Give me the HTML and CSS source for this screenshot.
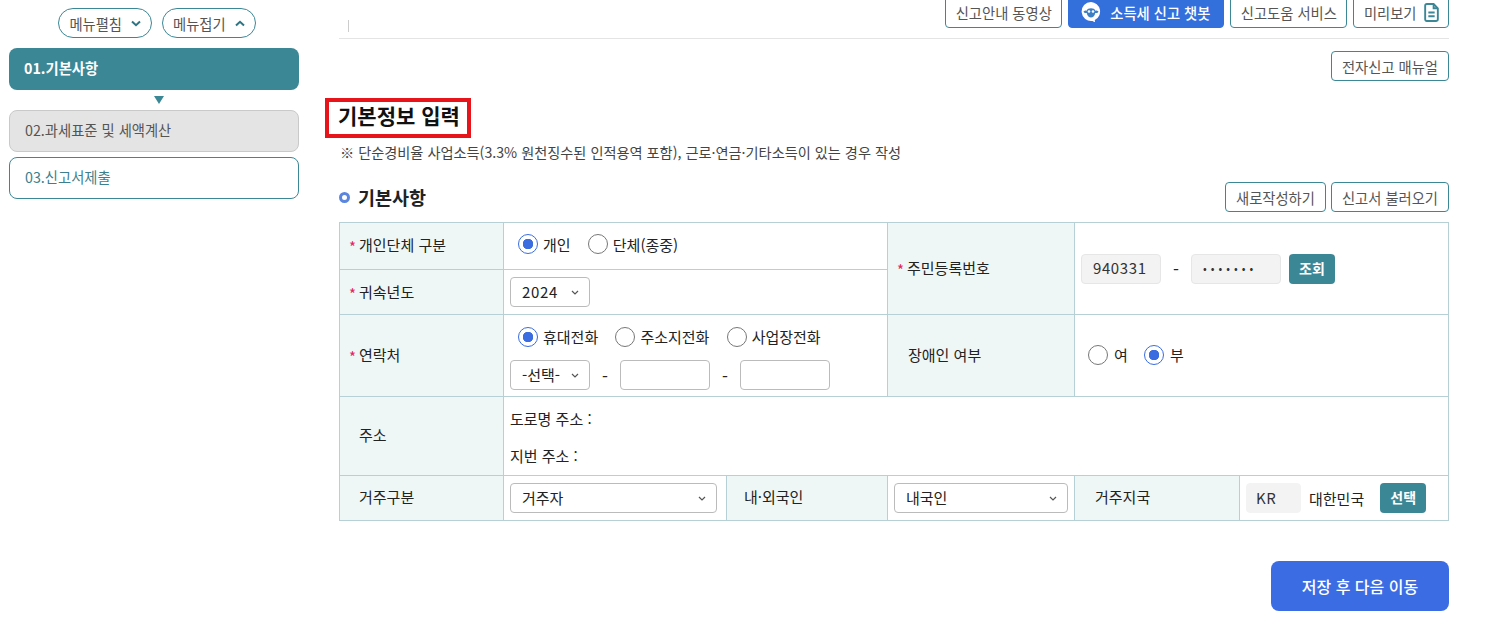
FILE: index.html
```html
<!DOCTYPE html>
<html lang="ko">
<head>
<meta charset="utf-8">
<title>기본정보 입력</title>
<link rel="stylesheet" href="styles.css">
</head>
<body>
<div class="page">
  <aside class="side">
    <div class="toggles">
      <button class="pill">메뉴펼침<svg class="chev" viewBox="0 0 10 7"><path d="M1 1.500 5 5.200 9 1.500"/></svg></button>
      <button class="pill">메뉴접기<svg class="chev" viewBox="0 0 10 7"><path d="M1 5.500 5 1.800 9 5.500"/></svg></button>
    </div>
    <div class="step active">01.기본사항</div>
    <div class="arrow"></div>
    <div class="step gray">02.과세표준 및 세액계산</div>
    <div class="step open">03.신고서제출</div>
  </aside>
  <main class="main">
    <header class="top">
      <span class="tick"></span>
      <div class="top-btns">
        <button class="btn">신고안내 동영상</button>
        <button class="btn chat">
          <svg class="bot" viewBox="0 0 20 20"><path d="M10 0a9.500 9.500 0 1 0 1.500 18.900L14 20.500l-.2-2.500A9.500 9.500 0 0 0 10 0z" fill="#fff"/><path d="M2.500 9.500c1.200-1 2.300-1.200 3.300-.8C6.300 5.500 13.700 5.500 14.200 8.700c1-.4 2.100-.2 3.300.8-.6 1.500-2 1.700-3.200 1.400-.6 3-2.400 4.600-4.300 4.600s-3.700-1.600-4.300-4.600c-1.200.3-2.600.1-3.200-1.400z" fill="#3b7fc4"/><circle cx="8" cy="9.500" r="1.300" fill="#fff"/><circle cx="12" cy="9.500" r="1.300" fill="#fff"/></svg>
          소득세 신고 챗봇</button>
        <button class="btn">신고도움 서비스</button>
        <button class="btn">미리보기
          <svg class="doc" viewBox="0 0 14 18"><path d="M1 2.500A1.500 1.500 0 0 1 2.500 1H9l4 4v10.500a1.500 1.500 0 0 1-1.500 1.500h-9A1.500 1.500 0 0 1 1 15.500z"/><path d="M9 1v4h4M4 9h6M4 12.500h6"/></svg>
        </button>
      </div>
    </header>
    <div class="manual"><button class="btn tall">전자신고 매뉴얼</button></div>
    <h1 class="title">기본정보 입력</h1>
    <p class="note">※ 단순경비율 사업소득(3.3% 원천징수된 인적용역 포함), 근로·연금·기타소득이 있는 경우 작성</p>
    <div class="sec-head">
      <h2 class="sec-title"><span class="dot"></span>기본사항</h2>
      <div class="sec-btns">
        <button class="btn tall">새로작성하기</button>
        <button class="btn tall">신고서 불러오기</button>
      </div>
    </div>
    <table class="form">
      <colgroup>
        <col class="c1"><col class="c2"><col class="c3"><col class="c4"><col class="c5"><col class="c6">
      </colgroup>
      <tr class="r1">
        <th><span class="req">*</span>개인단체 구분</th>
        <td colspan="2" class="radios pad-r">
          <label class="radio"><span class="rd on"></span>개인</label>
          <label class="radio"><span class="rd"></span>단체(종중)</label>
        </td>
        <th rowspan="2"><span class="req">*</span>주민등록번호</th>
        <td colspan="2" rowspan="2" class="idcell">
          <div class="idrow">
            <span class="ro w80">940331</span>
            <span class="dash">-</span>
            <span class="ro w90 dots">•••••••</span>
            <button class="mini">조회</button>
          </div>
        </td>
      </tr>
      <tr class="r2">
        <th><span class="req">*</span>귀속년도</th>
        <td colspan="2"><span class="sel w80 num">2024<svg class="caret" viewBox="0 0 8 5"><path d="M1 1 4 4 7 1"/></svg></span></td>
      </tr>
      <tr class="r3">
        <th><span class="req">*</span>연락처</th>
        <td colspan="2" class="contact">
          <div class="radios tight">
            <label class="radio"><span class="rd on"></span>휴대전화</label>
            <label class="radio"><span class="rd"></span>주소지전화</label>
            <label class="radio"><span class="rd"></span>사업장전화</label>
          </div>
          <div class="phone">
            <span class="sel w80">-선택-<svg class="caret" viewBox="0 0 8 5"><path d="M1 1 4 4 7 1"/></svg></span>
            <span class="dash">-</span>
            <span class="inp"></span>
            <span class="dash">-</span>
            <span class="inp"></span>
          </div>
        </td>
        <th class="plain">장애인 여부</th>
        <td colspan="2" class="radios yn">
          <label class="radio"><span class="rd"></span>여</label>
          <label class="radio"><span class="rd on"></span>부</label>
        </td>
      </tr>
      <tr class="r4">
        <th class="plain first">주소</th>
        <td colspan="5">
          <div class="addr">
            <div>도로명 주소 :</div>
            <div>지번 주소 :</div>
          </div>
        </td>
      </tr>
      <tr class="r5">
        <th class="plain first">거주구분</th>
        <td><span class="sel wide1">거주자<svg class="caret" viewBox="0 0 8 5"><path d="M1 1 4 4 7 1"/></svg></span></td>
        <th class="plain mid">내·외국인</th>
        <td><span class="sel wide2">내국인<svg class="caret" viewBox="0 0 8 5"><path d="M1 1 4 4 7 1"/></svg></span></td>
        <th class="plain">거주지국</th>
        <td>
          <div class="idrow">
            <span class="ro w55">KR</span>
            <span class="kr">대한민국</span>
            <button class="mini">선택</button>
          </div>
        </td>
      </tr>
    </table>
    <div class="foot"><button class="save">저장 후 다음 이동</button></div>
  </main>
</div>
</body>
</html>
```
FILE: styles.css
```css
* { box-sizing: border-box; }
html, body { margin: 0; padding: 0; height: 100%; overflow: hidden; background: #fff; }
body { font-family: "Noto Sans CJK KR", "Noto Sans", sans-serif; font-size: 14.3px; color: #222; }
button { font-family: inherit; cursor: pointer; }

.page { display: flex; align-items: flex-start; padding-left: 9px; }

/* sidebar */
.side { width: 290px; flex: none; margin-right: 40px; }
.toggles { display: flex; justify-content: center; gap: 10px; padding: 8px 0 0 6px; margin-bottom: 10px; }
.pill { height: 30px; padding: 0 10px; display: flex; align-items: center; gap: 9px; background: #fff; border: 1px solid #3c8796; border-radius: 15px; font-size: 14.3px; color: #555; }
.chev { width: 10px; height: 7px; fill: none; stroke: #2f7482; stroke-width: 2; }
.step { height: 42px; border-radius: 8px; padding: 0 15px 3px; display: flex; align-items: center; font-size: 14.3px; }
.step.active { background: #3c8796; color: #fff; font-weight: 700; }
.step.gray { background: #e4e4e4; border: 1px solid #c9c9c9; color: #555; margin-bottom: 5px; }
.step.open { background: #fff; border: 1px solid #3c8796; color: #3c7f8e; }
.arrow { width: 0; height: 0; margin: 6px 0 6px 145px; border-left: 5px solid transparent; border-right: 5px solid transparent; border-top: 8px solid #3c8796; }

/* main */
.main { width: 1110px; flex: none; }
.top { height: 43px; margin-top: -4px; border-bottom: 1px solid #e4e4e4; display: flex; justify-content: space-between; align-items: flex-start; }
.tick { width: 1px; height: 12px; background: #ccc; margin: 24px 0 0 9px; }
.top-btns { display: flex; gap: 6px; }
.btn { height: 32px; padding: 0 9.500px; display: inline-flex; align-items: center; justify-content: center; background: #fff; border: 1px solid #3c8796; border-radius: 4px; font-size: 14.3px; color: #555; white-space: nowrap; }
.btn.tall { height: 30px; padding: 0 10px; }
.btn.chat { width: 156px; padding: 0 0 0 12px; justify-content: flex-start; background: #3470dc; border-color: #3470dc; color: #fff; font-weight: 500; font-size: 14.3px; gap: 9px; }
.bot { width: 20px; height: 20px; flex: none; }
.doc { width: 15px; height: 19px; margin-left: 7px; fill: none; stroke: #3c8796; stroke-width: 1.800; }
.manual { display: flex; justify-content: flex-end; margin-top: 12px; }
.title { display: inline-block; margin: 17px 0 0 -14px; height: 40px; width: 146px; padding-left: 9px; border: 4px solid #e8141c; font-size: 21px; font-weight: 700; line-height: 26px; color: #111; white-space: nowrap; }
.note { margin: 5px 0 0 1px; font-size: 14.2px; line-height: 18px; color: #444; }
.sec-head { display: flex; justify-content: space-between; align-items: center; margin-top: 21px; height: 30px; }
.sec-title { margin: 0; display: flex; align-items: center; font-size: 18.500px; font-weight: 700; color: #222; }
.dot { width: 11px; height: 11px; border: 3px solid #5b86e0; border-radius: 50%; margin-right: 8px; }
.sec-btns { display: flex; gap: 5px; }

/* table */
.form { width: 1109px; margin-top: 10px; border-collapse: collapse; table-layout: fixed; }
.c1 { width: 164px; } .c2 { width: 223px; } .c3 { width: 161px; } .c4 { width: 187px; } .c5 { width: 165px; } .c6 { width: 209px; }
.form th, .form td { border: 1px solid #b5d1d5; padding: 0 6px; font-size: 15px; vertical-align: middle; }
.form th { background: #eff7f6; font-weight: 400; text-align: left; padding: 0 0 3px 9px; color: #222; }
.form .r2 th { padding-bottom: 1px; }
.form th.plain { padding-left: 20px; }
.form th.first { padding: 0 0 4px 19px; }
.form th.mid { padding: 0 0 4px 17px; }
.r5 th.plain { padding-bottom: 4px; }
.r1 { height: 47px; } .r2 { height: 45px; } .r3 { height: 82px; } .r4 { height: 79px; } .r5 { height: 45px; }
.req { color: #e0245e; font-size: 15px; margin-right: 3px; vertical-align: -2px; line-height: 1; }
.radio { display: inline-flex; align-items: center; gap: 5px; margin-right: 13px; color: #222; }
td.radios.pad-r { padding-left: 14px; }
.form td.radios.yn { padding: 2px 6px 0 13px; }
.radios.yn .radio { gap: 6px; margin-right: 12px; }
.radios.tight { height: 20px; padding-left: 8px; line-height: 20px; }
.radios.tight .radio { margin-right: 13px; }
.form td.contact { padding-top: 6px; }
.rd { width: 20px; height: 20px; border: 1px solid #777; border-radius: 50%; background: #fff; display: inline-block; flex: none; }
.rd.on { border-color: #3b6ce0; background: radial-gradient(circle, #3b6ce0 0 5px, #fff 5.5px); }
.sel { height: 30px; display: inline-flex; align-items: center; justify-content: space-between; padding: 0 10px 2px 11px; border: 1px solid #bbb; border-radius: 4px; background: #fff; color: #222; }
.sel.num { letter-spacing: .7px; }
.w80 { width: 80px; }
.wide1 { width: 207px; }
.wide2 { width: 174px; }
.caret { width: 8px; height: 5px; fill: none; stroke: #555; stroke-width: 1.200; flex: none; margin-top: 2px; }
.idrow { display: flex; align-items: center; }
.ro { height: 30px; display: inline-flex; align-items: center; padding: 0 0 2px 11px; background: #f3f3f3; border: 1px solid #e6e6e6; border-radius: 4px; color: #333; letter-spacing: .6px; }
.w90 { width: 90px; }
.w55 { width: 55px; padding-left: 9px; border-color: #f3f3f3; }
.dots { font-size: 11px; letter-spacing: 4px; }
.dash { width: 30px; text-align: center; flex: none; font-size: 17px; }
.idrow .mini { margin-left: 8px; }
.mini { height: 30px; width: 46px; background: #3c8796; color: #fff; border: none; border-radius: 4px; font-size: 14px; font-weight: 700; padding: 0 0 2px; }
.kr { margin-left: 8px; margin-right: 16px; white-space: nowrap; }
.idrow .kr + .mini { margin-left: 0; }
.phone { display: flex; align-items: center; margin-top: 13px; }
.inp { width: 90px; height: 30px; border: 1px solid #bbb; border-radius: 4px; background: #fff; }
.addr { display: flex; flex-direction: column; gap: 17px; padding-top: 3px; }
.addr div { line-height: 20px; color: #222; }
.foot { display: flex; justify-content: flex-end; margin-top: 40px; }
.save { width: 178px; height: 50px; background: #3b6ce4; color: #fff; border: none; border-radius: 8px; font-size: 16px; font-weight: 500; }
```
